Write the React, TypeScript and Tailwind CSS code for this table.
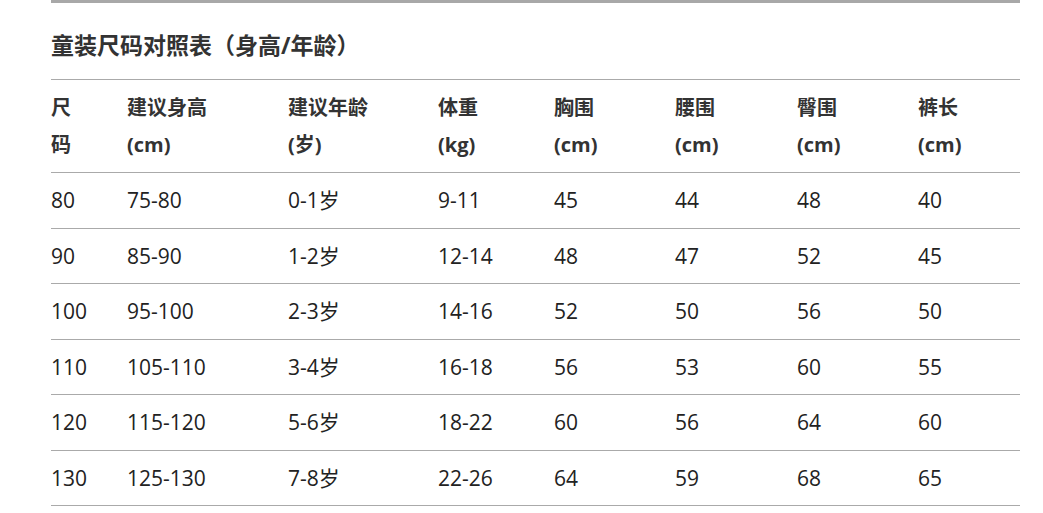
const font = "font-['Open_Sans','Noto_Sans_CJK_SC',sans-serif]";

const headers: string[][] = [
  ["尺", "码"],
  ["建议身高", "(cm)"],
  ["建议年龄", "(岁)"],
  ["体重", "(kg)"],
  ["胸围", "(cm)"],
  ["腰围", "(cm)"],
  ["臀围", "(cm)"],
  ["裤长", "(cm)"],
];

const rows: string[][] = [
  ["80", "75-80", "0-1岁", "9-11", "45", "44", "48", "40"],
  ["90", "85-90", "1-2岁", "12-14", "48", "47", "52", "45"],
  ["100", "95-100", "2-3岁", "14-16", "52", "50", "56", "50"],
  ["110", "105-110", "3-4岁", "16-18", "56", "53", "60", "55"],
  ["120", "115-120", "5-6岁", "18-22", "60", "56", "64", "60"],
  ["130", "125-130", "7-8岁", "22-26", "64", "59", "68", "65"],
];

const cols = "grid grid-cols-[76px_161px_150px_116px_121px_122px_121px_102px]";

export default function App() {
  return (
    <div className={`min-h-screen bg-white ${font}`}>
      <div className="ml-[51px] w-[969px] border-t-[3px] border-[#a8a8a8]">
        {/* Title */}
        <h2 className="pt-[26px] pb-[18px] text-[23px] leading-[32px] font-bold text-[#333]">
          童装尺码对照表（身高/年龄）
        </h2>

        {/* Header */}
        <div className={`${cols} border-t border-[#aaa] py-[9px] text-[20px] leading-[37px] font-bold text-[#333]`}>
          {headers.map((h, i) => (
            <div key={i}>
              <div>{h[0]}</div>
              <div>{h[1]}</div>
            </div>
          ))}
        </div>

        {/* Rows */}
        {rows.map((r, i) => (
          <div
            key={i}
            className={`${cols} border-t border-[#aaa] py-[9px] text-[21px] leading-[36.5px] text-[#222]`}
          >
            {r.map((c, j) => (
              <div key={j}>{c}</div>
            ))}
          </div>
        ))}
        <div className="border-t border-[#aaa]" />
      </div>
    </div>
  );
}
